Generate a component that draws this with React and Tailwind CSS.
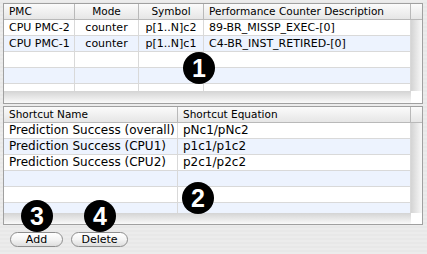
import React from 'react'

// ── data ──────────────────────────────────────────────────────────────────────
const pmcRows = [
  { pmc: 'CPU PMC-2', mode: 'counter', sym: 'p[1..N]c2', desc: '89-BR_MISSP_EXEC-[0]' },
  { pmc: 'CPU PMC-1', mode: 'counter', sym: 'p[1..N]c1', desc: 'C4-BR_INST_RETIRED-[0]' },
  {}, {}, {},
]

const shortcutRows = [
  { name: 'Prediction Success (overall)', eq: 'pNc1/pNc2' },
  { name: 'Prediction Success (CPU1)', eq: 'p1c1/p1c2' },
  { name: 'Prediction Success (CPU2)', eq: 'p2c1/p2c2' },
  {}, {}, {},
]

const rowBg = i => (i % 2 === 1 ? 'bg-[#edf3fe]' : 'bg-white')

// ── bits ──────────────────────────────────────────────────────────────────────
function HeadCell({ w, center, children }) {
  return (
    <div className={`${w} shrink-0 h-full border-r border-[#b9b9b9] px-[5px] leading-[15px] truncate ${center ? 'text-center' : ''}`}>
      {children}
    </div>
  )
}

function Cell({ w, center, children }) {
  return (
    <div className={`${w} shrink-0 h-full border-r border-[#d9d9d9] px-[5px] leading-[15px] whitespace-nowrap overflow-hidden ${center ? 'text-center' : ''}`}>
      {children}
    </div>
  )
}

function Badge({ n, className }) {
  return (
    <div className={`absolute w-[32px] h-[32px] rounded-full bg-black text-white flex items-center justify-center font-['Liberation_Sans',Arial,sans-serif] font-bold text-[25px] leading-none ${className}`}>
      {n}
    </div>
  )
}

function AquaButton({ w, children }) {
  return (
    <button className={`${w} h-[15px] rounded-full border border-[#8e8e8e] bg-linear-to-b from-white via-[#f4f4f4] to-[#dedede] text-[11px] leading-[13px] text-black`}>
      {children}
    </button>
  )
}

// ════════════════════════════════════════════════════════════════════════════
export default function App() {
  return (
    <div className="relative w-[427px] h-[254px] overflow-hidden bg-[repeating-linear-gradient(0deg,#ececec_0px,#ececec_2px,#e8e8e8_2px,#e8e8e8_4px)] pt-[3px] pl-[3px] font-['DejaVu_Sans',sans-serif] text-black">

      {/* ── PMC table ── */}
      <div className="w-[420px] h-[101px] border border-[#a0a0a0] bg-white flex flex-col">
        <div className="h-[16px] flex border-b border-[#b9b9b9] bg-linear-to-b from-[#fbfbfb] to-[#e6e6e6] text-[10.5px]">
          <HeadCell w="w-[71px]">PMC</HeadCell>
          <HeadCell w="w-[64px]" center>Mode</HeadCell>
          <HeadCell w="w-[65px]" center>Symbol</HeadCell>
          <HeadCell w="w-[207px]">Performance Counter Description</HeadCell>
          <div className="flex-1" />
        </div>
        <div className="flex h-[83px]">
          <div className="w-[407px] flex flex-col">
            <div className="h-[71px] overflow-hidden">
              {pmcRows.map((r, i) => (
                <div key={i} className={`h-[16px] flex border-b border-[#d9d9d9] text-[11px] ${rowBg(i)}`}>
                  <Cell w="w-[71px]">{r.pmc}</Cell>
                  <Cell w="w-[64px]" center>{r.mode}</Cell>
                  <Cell w="w-[65px]" center>{r.sym}</Cell>
                  <Cell w="w-[207px]">{r.desc}</Cell>
                </div>
              ))}
            </div>
            <div className="h-[12px] bg-linear-to-b from-[#d4d4d4] to-[#fafafa]" />
          </div>
          <div className="flex-1 flex flex-col">
            <div className="h-[71px] bg-linear-to-r from-[#d4d4d4] to-[#f8f8f8]" />
            <div className="h-[12px] bg-white" />
          </div>
        </div>
      </div>

      {/* ── Shortcut table ── */}
      <div className="mt-[2px] w-[420px] h-[119px] border border-[#a0a0a0] bg-white flex flex-col">
        <div className="h-[16px] flex border-b border-[#b9b9b9] bg-linear-to-b from-[#fbfbfb] to-[#e6e6e6] text-[10.5px]">
          <HeadCell w="w-[174px]">Shortcut Name</HeadCell>
          <HeadCell w="w-[233px]">Shortcut Equation</HeadCell>
          <div className="flex-1" />
        </div>
        <div className="flex h-[101px]">
          <div className="w-[407px] flex flex-col">
            <div className="h-[90px] overflow-hidden">
              {shortcutRows.map((r, i) => (
                <div key={i} className={`h-[16px] flex border-b border-[#d9d9d9] text-[12px] ${rowBg(i)}`}>
                  <Cell w="w-[174px]">{r.name}</Cell>
                  <Cell w="w-[233px]">{r.eq}</Cell>
                </div>
              ))}
            </div>
            <div className="h-[11px] bg-linear-to-b from-[#d4d4d4] to-[#fafafa]" />
          </div>
          <div className="flex-1 flex flex-col">
            <div className="h-[90px] bg-linear-to-r from-[#d4d4d4] to-[#f8f8f8]" />
            <div className="h-[11px] bg-white" />
          </div>
        </div>
      </div>

      {/* ── Buttons ── */}
      <div className="mt-[7px] ml-[7px] flex gap-[8px]">
        <AquaButton w="w-[53px]">Add</AquaButton>
        <AquaButton w="w-[57px]">Delete</AquaButton>
      </div>

      {/* ── Callouts ── */}
      <Badge n="1" className="left-[183px] top-[52px]" />
      <Badge n="2" className="left-[182px] top-[182px]" />
      <Badge n="3" className="left-[21px] top-[200px]" />
      <Badge n="4" className="left-[84px] top-[200px]" />
    </div>
  )
}
